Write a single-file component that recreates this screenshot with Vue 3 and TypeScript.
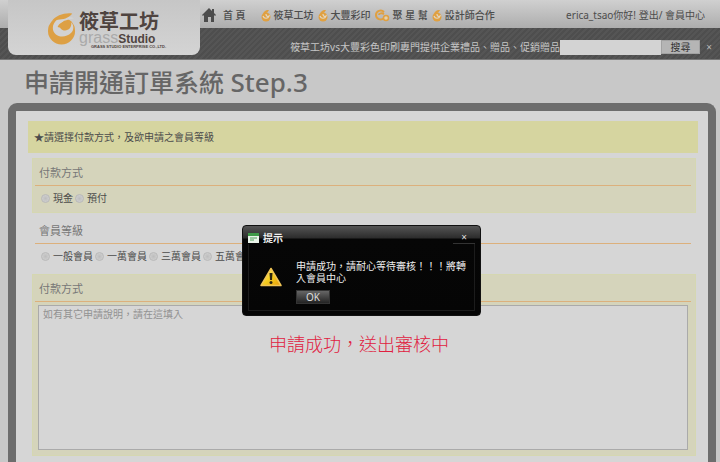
<script setup lang="ts">
import { ref } from 'vue'

interface NavItem {
  label: string
  icon: 'home' | 'swirl' | 'double'
}

const navItems: NavItem[] = [
  { label: '首 頁', icon: 'home' },
  { label: '筱草工坊', icon: 'swirl' },
  { label: '大豐彩印', icon: 'swirl' },
  { label: '聚 星 幫', icon: 'double' },
  { label: '設計師合作', icon: 'swirl' },
]

const payments: string[] = ['現金', '預付']
const levels: string[] = ['一般會員', '一萬會員', '三萬會員', '五萬會員']

const payment = ref('')
const level = ref('')
const keyword = ref('')
const note = ref('')
const dialogOpen = ref(true)
</script>

<template>
  <div class="page">
    <header class="header">
      <a class="logo" href="#">
        <svg class="logo-mark" viewBox="0 0 30 34" aria-hidden="true">
          <circle cx="14" cy="19" r="14" fill="#dda044" />
          <path d="M27 6C17 1 5 7 5 16c0 9 12 12 19 5 3-3 3-8 0-11 1 6-4 10-9 8-5-2-2-9 4-10 3-1 6-1 8-2z" fill="#d2d2d2" />
          <path d="M25 1C17 0 8 3 4 9c5-3 11-1 16-4 2-1 4-2 5-4z" fill="#dda044" />
          <path d="M10 15c1-4 6-6 10-6-1 5-5 8-10 6z" fill="#dda044" />
        </svg>
        <span class="logo-text">
          <span class="logo-name">筱草工坊</span>
          <span class="logo-latin"><span class="logo-grass">grass</span><b>Studio</b></span>
          <span class="logo-small">GRASS STUDIO ENTERPRISE CO.,LTD.</span>
        </span>
      </a>
      <div class="bars">
        <div class="top-bar">
          <nav class="nav">
            <a v-for="item in navItems" :key="item.label" href="#" class="nav-link" :class="item.icon">
              <svg v-if="item.icon === 'home'" class="home-icon" viewBox="0 0 14 14" aria-hidden="true">
                <path d="M7 0 0 7l1 1 1-1v7h4V9h3v5h3V7l1 1 1-1-2-2V1h-2v2z" fill="#4c4c4c" />
              </svg>
              <svg v-else-if="item.icon === 'swirl'" class="swirl-icon" viewBox="0 0 10 13" aria-hidden="true">
                <circle cx="5" cy="8" r="4.5" fill="#e0a040" />
                <path d="M8 1C4 1 2 3 2 6c2-2 4-1 6-5z" fill="#e0a040" />
                <path d="M2 7c1 3 5 3 6 0-2 1-3 0-3-2" fill="none" stroke="#e3d8c4" stroke-width="1.2" />
              </svg>
              <svg v-else class="double-icon" viewBox="0 0 15 13" aria-hidden="true">
                <path d="M9 3C6 0 1 2 1 6s5 6 8 3M4 6c0-2 3-2 5-1" fill="none" stroke="#e0a040" stroke-width="2" />
                <circle cx="11" cy="9" r="2.5" fill="#e3d0ad" stroke="#e0a040" stroke-width="1.5" />
              </svg>
              <span>{{ item.label }}</span>
            </a>
          </nav>
          <div class="account">
            <span>erica_tsao你好! </span><a href="#">登出</a>/ <a href="#">會員中心</a>
          </div>
        </div>
        <form class="search-bar" @submit.prevent>
          <label for="keyword">筱草工坊vs大豐彩色印刷專門提供企業禮品、贈品、促銷贈品</label>
          <input id="keyword" v-model="keyword" type="text" />
          <button class="search-button" type="submit">搜尋</button>
          <button class="bar-close" type="button">×</button>
        </form>
      </div>
    </header>

    <h1>申請開通訂單系統 <span class="step">Step.3</span></h1>

    <main class="panel">
      <p class="notice">★請選擇付款方式，及欲申請之會員等級</p>

      <section class="group tinted">
        <h2 id="pay-title">付款方式</h2>
        <div class="options" role="radiogroup" aria-labelledby="pay-title">
          <label v-for="name in payments" :key="name">
            <input v-model="payment" type="radio" name="payment" :value="name" />{{ name }}
          </label>
        </div>
      </section>

      <section class="group">
        <h2 id="level-title">會員等級</h2>
        <div class="options" role="radiogroup" aria-labelledby="level-title">
          <label v-for="name in levels" :key="name">
            <input v-model="level" type="radio" name="level" :value="name" />{{ name }}
          </label>
        </div>
      </section>

      <section class="group tinted note">
        <h2><label for="note">付款方式</label></h2>
        <textarea id="note" v-model="note" placeholder="如有其它申請說明，請在這填入"></textarea>
      </section>
    </main>

    <div class="overlay">
      <div v-if="dialogOpen" class="dialog" role="dialog" aria-labelledby="dialog-title">
        <div class="dialog-head">
          <svg class="window-icon" viewBox="0 0 11 10" aria-hidden="true">
            <path d="M0 0h11v10H0z" fill="#e9f3e9" />
            <path d="M0 0h11v3H0z" fill="#3f9a48" />
            <path d="M2 5h7M2 7h4" stroke="#4f9f58" />
          </svg>
          <span id="dialog-title" class="dialog-title">提示</span>
          <button class="dialog-close" type="button" @click="dialogOpen = false">×</button>
        </div>
        <div class="dialog-body">
          <svg class="warning-icon" viewBox="0 0 22 20" aria-hidden="true">
            <defs>
              <linearGradient id="warn" x1="0" y1="0" x2="1" y2="1">
                <stop offset="0" stop-color="#fff3a0" />
                <stop offset="0.5" stop-color="#f6cf20" />
                <stop offset="1" stop-color="#e59a08" />
              </linearGradient>
            </defs>
            <path d="M11 1.500 21 18.500H1z" fill="url(#warn)" stroke="#f0c455" stroke-width="1.500" stroke-linejoin="round" />
            <path d="M9.500 6h3l-.5 7h-2z" fill="#2b2410" />
            <circle cx="11" cy="15.500" r="1.500" fill="#2b2410" />
          </svg>
          <div class="dialog-content">
            <p>申請成功，請耐心等待審核！！！將轉入會員中心</p>
            <button class="ok" type="button" @click="dialogOpen = false">OK</button>
          </div>
        </div>
      </div>
      <p class="caption">申請成功，送出審核中</p>
    </div>
  </div>
</template>

<style>
body {
  background: #c8c8c8;
}
</style>

<style scoped>
* {
  box-sizing: border-box;
}

.page {
  position: relative;
  display: flex;
  flex-direction: column;
  height: 100vh;
  overflow: hidden;
  background: #c8c8c8;
  color: #4c4c4c;
  font: 10px/12px "Noto Sans", "Noto Sans CJK TC", sans-serif;
}

h1,
h2,
p {
  margin: 0;
}

a {
  color: inherit;
  text-decoration: none;
}

button,
input,
textarea {
  margin: 0;
  font: inherit;
}

.header {
  display: flex;
  height: 60px;
  padding-left: 8px;
  background:
    linear-gradient(#d0d0d0, #adadad) 0 0 / 100% 28px no-repeat,
    repeating-linear-gradient(135deg, #4e4e4e 0 2px, #555 2px 4px);
  border-bottom: 1px solid #777;
}

.logo {
  display: flex;
  width: 192px;
  height: 55px;
  padding: 12px 0 0 40px;
  gap: 2px;
  background: linear-gradient(#c6c6c6, #d4d4d4);
  border-radius: 0 0 8px 8px;
}

.logo-mark {
  width: 29px;
  height: 34px;
}

.logo-text {
  display: flex;
  flex-direction: column;
  color: #4f4440;
}

.logo-name {
  font-size: 20px;
  line-height: 20px;
  font-weight: 700;
}

.logo-latin {
  font-family: "Liberation Sans", sans-serif;
  font-size: 12px;
  line-height: 12px;
  white-space: nowrap;
}

.logo-grass {
  color: #aaa;
  font-size: 16px;
}

.logo-small {
  padding-left: 12px;
  font-family: "Liberation Sans", sans-serif;
  font-size: 4px;
  line-height: 4px;
  font-weight: 700;
}

.bars {
  flex: 1;
  min-width: 0;
}

.top-bar {
  display: flex;
  justify-content: space-between;
  align-items: center;
  height: 28px;
  padding: 2px 15px 0 2px;
  white-space: nowrap;
}

.nav {
  display: flex;
  align-items: center;
  gap: 4px;
  font-weight: 500;
}

.nav-link {
  display: flex;
  align-items: center;
  gap: 3px;
}

.nav-link.home {
  gap: 7px;
  margin-right: 11px;
}

.home-icon {
  width: 14px;
  height: 14px;
}

.swirl-icon {
  width: 10px;
  height: 13px;
}

.double-icon {
  width: 15px;
  height: 13px;
}

.search-bar {
  display: flex;
  justify-content: flex-end;
  align-items: center;
  height: 32px;
  padding: 6px 6px 0 0;
  color: #c6c6c6;
  white-space: nowrap;
}

.search-bar input {
  width: 101px;
  height: 15px;
  padding: 0 2px;
  border: 0;
  background: #d3d3d3;
}

.search-button {
  width: 39px;
  height: 14px;
  padding: 0;
  border: 1px solid #a2a2a2;
  background: #b5b5b5;
  color: #333;
  line-height: 12px;
}

.bar-close {
  width: 14px;
  padding: 0 0 0 4px;
  border: 0;
  background: none;
  color: #b8b8b8;
}

h1 {
  padding: 5px 24px 4px;
  color: #666;
  font-size: 25px;
  line-height: 34px;
  font-weight: 500;
}

.step {
  font-size: 26px;
}

.panel {
  flex: 1;
  margin: 0 4px 0 8px;
  padding: 10px 10px 0 12px;
  border: 8px solid #6d6d6d;
  border-bottom: 0;
  border-radius: 9px 9px 0 0;
  background: #d6d6d6;
}

.notice {
  padding: 10px 6px;
  background: #d6d5a0;
  margin-bottom: 5px;
}

.group {
  height: 55px;
  margin: 0 2px 3px 4px;
  padding: 8px 5px 0 3px;
}

.tinted {
  border: 1px solid #d5d7b1;
  background: #d5d4bb;
  padding: 7px 4px 0 2px;
}

.group h2 {
  height: 20px;
  padding-left: 4px;
  border-bottom: 1px solid #dcb07c;
  color: #777;
  font-size: 11px;
  line-height: 14px;
  font-weight: 400;
}

.options {
  display: flex;
  gap: 2px;
  padding: 6px 0 0 6px;
}

.options label {
  display: flex;
  align-items: center;
  gap: 3px;
}

.options input {
  appearance: none;
  width: 9px;
  height: 9px;
  border: 1px solid #b9b9b9;
  border-radius: 50%;
  background: radial-gradient(#bdbdbd, #d4d4d4);
}

.options input:checked {
  background: radial-gradient(#555 40%, #d4d4d4 50%);
}

.note {
  height: auto;
  padding-bottom: 5px;
}

.note textarea {
  display: block;
  width: calc(100% - 6px);
  height: 145px;
  margin: 3px 3px 0;
  padding: 2px 4px;
  border: 1px solid #aaa;
  background: #d6d6d6;
  resize: none;
  outline: 0;
}

.note textarea::placeholder {
  color: #929292;
}

.overlay {
  position: absolute;
  top: 225px;
  left: 242px;
  width: 239px;
}

.dialog {
  height: 91px;
  padding: 0 5px 4px;
  border: 1px solid #111;
  border-radius: 4px;
  background: linear-gradient(#555, #2c2c2c 12px, #060606 13px, #050505);
  color: #eee;
}

.dialog-head {
  display: flex;
  align-items: center;
  gap: 4px;
  height: 18px;
  padding-top: 5px;
}

.window-icon {
  width: 11px;
  height: 10px;
}

.dialog-title {
  font-weight: 700;
}

.dialog-close {
  width: 22px;
  margin-left: auto;
  padding: 0;
  border: 0;
  border-bottom: 1px solid #333;
  background: none;
  color: #ddd;
}

.dialog-body {
  display: flex;
  gap: 14px;
  height: 67px;
  padding: 16px 4px 0 11px;
  border: 1px solid #1c1c1c;
  border-top: 0;
}

.warning-icon {
  flex: none;
  width: 22px;
  height: 20px;
  margin-top: 7px;
}

.dialog-content {
  width: 170px;
}

.ok {
  width: 34px;
  height: 14px;
  margin-top: 6px;
  padding: 0;
  border: 1px solid #333;
  background: linear-gradient(#666, #242424);
  color: #ddd;
  line-height: 12px;
}

.caption {
  margin-top: 14px;
  padding-left: 27px;
  color: #e02040;
  font-size: 18px;
  line-height: 28px;
  font-weight: 300;
}
</style>
